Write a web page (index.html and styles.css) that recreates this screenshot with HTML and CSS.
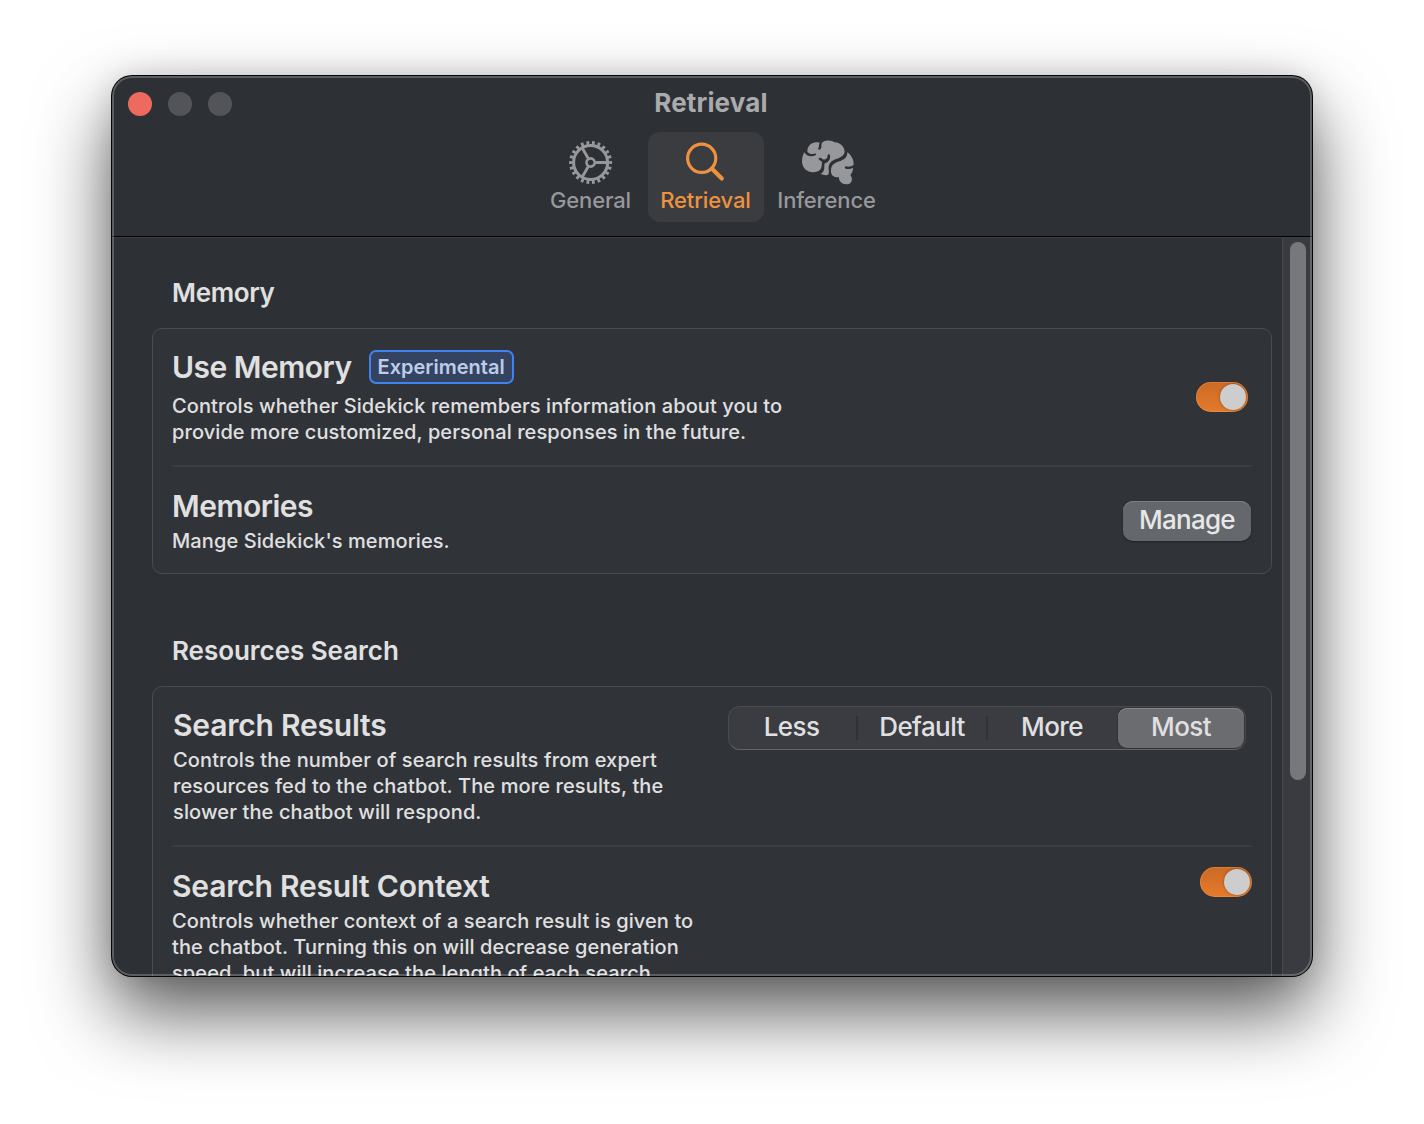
FILE: index.html
```html
<!DOCTYPE html>
<html lang="en">
<head>
<meta charset="utf-8">
<title>Retrieval</title>
<link rel="stylesheet" href="styles.css">
</head>
<body>
<main class="window">
  <header class="toolbar">
    <div class="titlebar">
      <div class="lights"><span class="light light-close"></span><span class="light"></span><span class="light"></span></div>
      <h1 class="window-title">Retrieval</h1>
    </div>
    <nav class="tabs">
      <a class="tab tab-general">
        <svg class="tab-icon" width="44" height="44" viewBox="-21.6 -22.5 44 44" fill="none" stroke="currentColor">
          <circle r="17" stroke-width="3"/>
          <circle r="19.6" stroke-width="3.8" pathLength="44" stroke-dasharray="1 1" stroke-dashoffset="0.5"/>
          <circle r="4.1" stroke-width="2.6"/>
          <path d="M5 0H17M-2.5 -4.3L-8.5 -14.7M-2.5 4.3L-8.5 14.7" stroke-width="2.8"/>
        </svg>
        <span class="tab-label">General</span>
      </a>
      <a class="tab tab-active">
        <svg class="tab-icon" width="44" height="44" viewBox="0 0 44 44" fill="none" stroke="currentColor" stroke-linecap="round">
          <circle cx="17.7" cy="18.3" r="14.1" stroke-width="3.2"/>
          <path d="M28 28.8L37.8 38.6" stroke-width="4.2"/>
        </svg>
        <span class="tab-label">Retrieval</span>
      </a>
      <a class="tab tab-inference">
        <svg class="tab-icon" width="54" height="44" viewBox="11 19 162 132" overflow="visible" fill="currentColor">
          <path d="M24 56C30 67 45 72 59 64C60 61 57 59 54 60C46 63 38 60 33 54C33 37 45 26 60 26C64 26 67 26 70 27C66 34 70 39 65 45C66 49 70 49 73 46C78 40 73 32 77 27C84 21 91 19 99 21C106 21 111 23 115 26C131 26 144 39 145 54C143 66 133 71 120 76C102 82 96 92 97 106C98 113 98 119 95 124C87 125 79 124 73 121C82 114 84 109 84 99C84 94 84 91 86 89C97 86 103 76 101 64C99 60 94 61 94 65C94 76 86 80 78 76C74 73 71 71 67 74C66 78 70 81 77 84C77 89 76 92 76 98C75 105 72 109 65 113C40 122 19 108 17 86C17 74 19 64 24 56Z"/>
          <path d="M153 55C164 64 173 77 172 93C164 99 157 100 149 98C145 98 144 103 148 105C156 107 163 106 170 102C170 112 167 118 162 124C169 134 169 146 158 151C147 154 136 150 131 143C128 139 128 135 128 131C112 132 102 123 104 108C105 94 114 88 129 83C144 78 154 70 153 55Z"/>
        </svg>
        <span class="tab-label">Inference</span>
      </a>
    </nav>
  </header>
  <div class="content">
    <div class="pane">
      <h2 class="section-title section-tight">Memory</h2>
      <section class="group">
        <div class="row row-memory">
          <div class="text">
            <div class="headline"><h3 class="title title-tight">Use Memory</h3><span class="badge">Experimental</span></div>
            <p class="caption">Controls whether Sidekick remembers information about you to<br>provide more customized, personal responses in the future.</p>
          </div>
          <span class="toggle"><span class="knob"></span></span>
        </div>
        <div class="row row-memories">
          <div class="text">
            <h3 class="title title-tight">Memories</h3>
            <p class="caption">Mange Sidekick's memories.</p>
          </div>
          <button class="button">Manage</button>
        </div>
      </section>
      <h2 class="section-title">Resources Search</h2>
      <section class="group">
        <div class="row row-results">
          <div class="text">
            <h3 class="title">Search Results</h3>
            <p class="caption">Controls the number of search results from expert<br>resources fed to the chatbot. The more results, the<br>slower the chatbot will respond.</p>
          </div>
          <div class="segmented">
            <span class="segment segment-first">Less</span><span class="segment">Default</span><span class="segment">More</span><span class="segment segment-on">Most</span>
          </div>
        </div>
        <div class="row row-context">
          <div class="text">
            <h3 class="title">Search Result Context</h3>
            <p class="caption">Controls whether context of a search result is given to<br>the chatbot. Turning this on will decrease generation<br>speed, but will increase the length of each search</p>
          </div>
          <span class="toggle"><span class="knob"></span></span>
        </div>
      </section>
    </div>
    <div class="scrollbar"><div class="thumb"></div></div>
  </div>
</main>
</body>
</html>
```
FILE: styles.css
```css
* { box-sizing: border-box; }
body {
  margin: 0;
  height: 1124px;
  overflow: hidden;
  padding: 76px 112px;
  background: #fff;
  color: #e0e0e1;
  font-family: Inter, "Liberation Sans", sans-serif;
}
h1, h2, h3, p { margin: 0; }
.window {
  position: relative;
  display: flex;
  flex-direction: column;
  width: 1200px;
  height: 900px;
  overflow: hidden;
  border-radius: 20px;
  background: #2d3034;
  box-shadow: 0 0 0 1px #050505, 0 36px 76px rgba(0, 0, 0, .66), 0 0 30px rgba(0, 0, 0, .12);
}
.window::after {
  content: "";
  position: absolute;
  inset: 0;
  border: 2px solid rgba(255, 255, 255, .22);
  border-radius: 20px;
  pointer-events: none;
}
.toolbar {
  flex: none;
  height: 162px;
  border-bottom: 1px solid #3c3f43;
  box-shadow: inset 0 -1px #000;
}
.titlebar {
  display: grid;
  grid-template-columns: 1fr auto 1fr;
  align-items: center;
  height: 56px;
  padding: 0 16px;
}
.lights { display: flex; gap: 16px; }
.light { width: 24px; height: 24px; border-radius: 50%; background: #525459; }
.light-close { background: #ed6a5e; }
.window-title {
  padding: 0 2px 2px 0;
  font-size: 26px;
  line-height: 52px;
  font-weight: 700;
  letter-spacing: .15px;
  color: #a9abad;
}
.tabs { display: flex; justify-content: center; gap: 4px; }
.tab {
  display: flex;
  flex-direction: column;
  align-items: center;
  height: 90px;
  padding-top: 8px;
  border-radius: 12px;
  color: #97989b;
}
.tab-general { width: 106px; }
.tab-active { width: 116px; color: #ef923f; background: #3a3c40; }
.tab-inference { width: 118px; }
.tab-icon { display: block; }
.tab-label { padding-right: 1px; font-size: 22px; line-height: 32px; font-weight: 500; letter-spacing: -.15px; white-space: nowrap; }
.content { display: flex; flex: 1; min-height: 0; }
.pane { flex: 1; padding: 0 10px 0 40px; }
.scrollbar { width: 30px; padding: 4px 6px 0 7px; background: #393b40; border-left: 1px solid #484a4e; }
.thumb { width: 16px; height: 538px; border-radius: 8px; background: #77787c; }
.section-title { height: 90px; padding: 35px 20px 0; font-size: 26px; line-height: 40px; font-weight: 600; letter-spacing: -.04px; }
.section-tight { letter-spacing: -.35px; }
.group {
  padding: 0 19px;
  border: 1.5px solid #4a4c50;
  border-radius: 10px;
  background: #303338;
}
.group + .section-title { height: 112px; padding-top: 57px; }
.row { display: flex; justify-content: space-between; align-items: flex-start; }
.row + .row { border-top: 2px solid #3a3d41; }
.row-memory { height: 136px; padding-top: 20px; }
.row-memories { height: 108px; padding-top: 20px; }
.row-results { height: 158px; padding-top: 19px; }
.row-context { height: 180px; padding-top: 20px; }
.row-results .text { padding-left: 1px; }
.title { padding-top: 1px; margin-bottom: 4px; font-size: 30px; line-height: 36px; font-weight: 600; letter-spacing: -.2px; white-space: nowrap; }
.title-tight { letter-spacing: -.5px; }
.headline { display: flex; align-items: center; gap: 17px; height: 36px; margin-bottom: 8px; }
.headline .title { padding: 0; margin: 0; }
.badge {
  width: 145px;
  height: 34px;
  border: 2px solid #3f82f2;
  border-radius: 7px;
  background: #34435f;
  color: #bccdec;
  font-size: 20px;
  line-height: 30px;
  font-weight: 600;
  text-align: center;
}
.caption { font-size: 20px; line-height: 26px; font-weight: 500; letter-spacing: .09px; white-space: nowrap; }
.row-results .caption { letter-spacing: .12px; }
.toggle {
  display: flex;
  justify-content: flex-end;
  width: 52px;
  height: 30px;
  padding: 2px;
  border-radius: 15px;
  background: linear-gradient(#ca6a24, #e47b2c);
  box-shadow: inset 0 0 0 1px rgba(255, 160, 80, .35);
}
.knob { width: 26px; height: 26px; border-radius: 50%; background: #cdcdce; box-shadow: 0 0 3px rgba(0, 0, 0, .35); }
.row-memory .toggle { margin: 33px 4px 0 0; }
.button {
  width: 128px;
  height: 40px;
  margin: 14px 1px 0 0;
  padding: 0 0 2px;
  border: 0;
  border-radius: 10px;
  background: #64676b;
  box-shadow: inset 0 1px #7c7f82, 0 1px 2px rgba(0, 0, 0, .35);
  color: #e7e7e8;
  font: 500 26px/38px Inter, "Liberation Sans", sans-serif;
  letter-spacing: -.75px;
}
.segmented {
  display: flex;
  width: 518px;
  height: 44px;
  margin-right: 6px;
  padding: 1px 1px 1px 0;
  border: 1px solid #4a4c50;
  border-bottom-color: #626467;
  border-radius: 12px;
  background: #3a3c41;
}
.segment {
  display: flex;
  flex: 0 0 130px;
  justify-content: center;
  align-items: center;
  padding: 0 2px 2px 0;
  font-size: 26px;
  line-height: 38px;
  font-weight: 500;
  letter-spacing: -.6px;
  background: linear-gradient(#303236, #303236) right center / 2px 24px no-repeat;
}
.segment-first { flex-basis: 129px; padding-right: 4px; }
.segment:nth-child(3) { background: none; }
.segment-on { flex-basis: 126px; padding-right: 0; background: #6b6c70; border-radius: 9px; box-shadow: inset 0 1px #85878a, 0 0 2px rgba(0, 0, 0, .5); }
```
